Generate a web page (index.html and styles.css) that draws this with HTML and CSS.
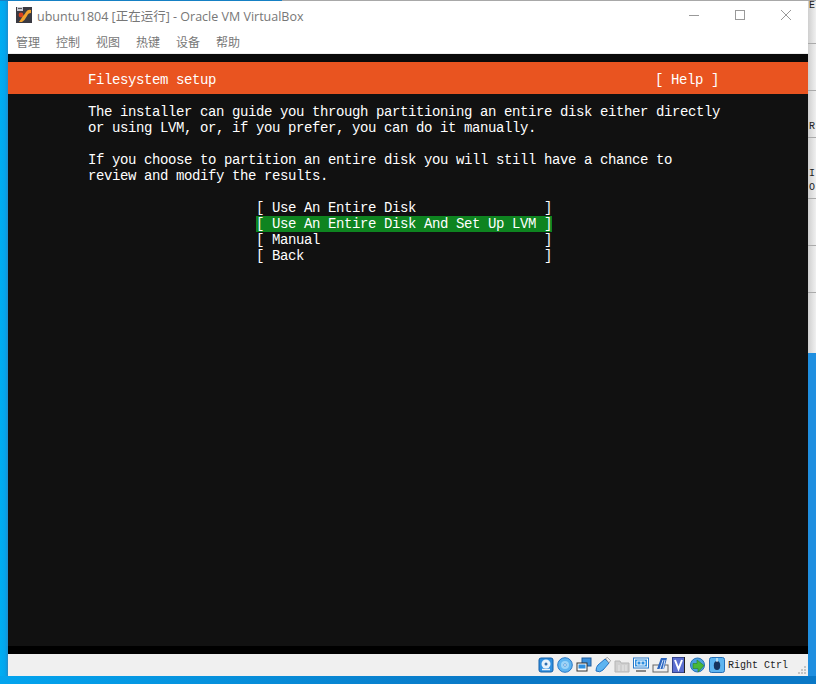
FILE: index.html
```html
<!DOCTYPE html>
<html lang="zh">
<head>
<meta charset="utf-8">
<title>ubuntu1804 - Oracle VM VirtualBox</title>
<link rel="stylesheet" href="styles.css">
</head>
<body>
<div class="top-edge"><div class="top-blue"></div><div class="top-gray"></div></div>
<div class="desktop">
  <div class="left-edge"></div>
  <main class="window">
    <header class="titlebar">
      <svg class="app-icon" width="16" height="16" viewBox="0 0 16 16">
        <rect width="16" height="16" fill="#3a3a42"/>
        <rect x="1" y="0" width="6" height="4" fill="#c9c9d2"/>
        <rect x="2" y="1" width="4" height="1" fill="#555"/>
        <circle cx="5" cy="8" r="2.4" fill="#d8401c"/>
        <path d="M3 15 L7 9 Q9 7 10 5 Q12 2 15 3 L15 6 Q12 6 11 9 Q9 13 6 15 Z" fill="#f2a22c"/>
      </svg>
      <span class="title">ubuntu1804 [正在运行] - Oracle VM VirtualBox</span>
      <div class="controls">
        <svg width="12" height="12" viewBox="0 0 12 12"><path d="M1 6.5H11" stroke="#999" fill="none"/></svg>
        <svg width="12" height="12" viewBox="0 0 12 12"><rect x="1.5" y="1.5" width="9" height="9" stroke="#999" fill="none"/></svg>
        <svg width="12" height="12" viewBox="0 0 12 12"><path d="M1 1L11 11M11 1L1 11" stroke="#999" fill="none"/></svg>
      </div>
    </header>
    <nav class="menubar">
      <span>管理</span><span>控制</span><span>视图</span><span>热键</span><span>设备</span><span>帮助</span>
    </nav>
    <section class="screen">
      <div class="term-header">
        <span>Filesystem setup</span>
        <span>[ Help ]</span>
      </div>
      <pre class="term-text">The installer can guide you through partitioning an entire disk either directly
or using LVM, or, if you prefer, you can do it manually.

If you choose to partition an entire disk you will still have a chance to
review and modify the results.</pre>
      <ul class="term-menu">
        <li><span>[ Use An Entire Disk</span><span>]</span></li>
        <li class="selected"><span>[ Use An Entire Disk And Set Up LVM</span><span>]</span></li>
        <li><span>[ Manual</span><span>]</span></li>
        <li><span>[ Back</span><span>]</span></li>
      </ul>
    </section>
    <footer class="statusbar">
      <div class="icons">
        <svg class="ic" width="16" height="16" viewBox="0 0 16 16"><rect x="1" y="1" width="14" height="14" rx="2" fill="#2f8fe0" stroke="#1560a8"/><circle cx="8" cy="7" r="4.5" fill="#e8f2fb"/><circle cx="8" cy="7" r="1.5" fill="#2f6fb0"/><path d="M4 12.5H12" stroke="#e8f2fb" stroke-width="1.5"/></svg>
        <svg class="ic" width="16" height="16" viewBox="0 0 16 16"><circle cx="8" cy="8" r="7.3" fill="#5db4f0" stroke="#2878c8"/><circle cx="8" cy="8" r="4" fill="#9ad4f8"/><circle cx="8" cy="8" r="1.3" fill="#fff" stroke="#2878c8" stroke-width=".6"/></svg>
        <svg class="ic" width="16" height="16" viewBox="0 0 16 16"><rect x="6" y="1" width="9" height="8" fill="#3c90dc" stroke="#1c5a9c"/><rect x="1" y="6" width="10" height="8" fill="#fff" stroke="#333"/><rect x="2.500" y="7.500" width="7" height="4" fill="#2f8fe0"/></svg>
        <svg class="ic" width="16" height="16" viewBox="0 0 16 16"><path d="M1 14 Q1 10 3 8 L10 2 L14 6 L8 13 Q5 16 1 14 Z" fill="#5db4f0" stroke="#2272c4"/><path d="M10.500 1.500 L12.500 0.500 L15.500 3.500 L14 6 Z" fill="#eee" stroke="#777" stroke-width=".6"/></svg>
        <svg class="ic" width="16" height="16" viewBox="0 0 16 16"><path d="M1 4H6L7 6H15V15H1Z" fill="#cfcfcf" stroke="#b5b5b5"/><path d="M5 8V14M9 8V14M12 8V14" stroke="#e8e8e8"/></svg>
        <svg class="ic" width="16" height="16" viewBox="0 0 16 16"><rect x="0.500" y="1" width="15" height="10" fill="#fff" stroke="#2878c8"/><rect x="2" y="2.500" width="12" height="7" fill="#2f8fe0"/><path d="M4 4H12V8H4ZM8 4V8" fill="none" stroke="#fff"/><path d="M3 14H13" stroke="#888" stroke-width="2"/></svg>
        <svg class="ic" width="17" height="16" viewBox="0 0 17 16"><rect x="1" y="8" width="15" height="7" fill="#eee" stroke="#666"/><path d="M5 12 L9 1 H15 L12 12 Z" fill="#2c66c0"/><path d="M8 12 L11 3M11 12 L13 3" stroke="#cfe2fa"/></svg>
        <svg class="ic" width="13" height="16" viewBox="0 0 13 16"><rect x="0.500" y="0.500" width="12" height="15" fill="#5a6ed0" stroke="#33428c"/><path d="M3 3 L6.500 12 L10 3" stroke="#fff" stroke-width="2" fill="none"/></svg>
        <span class="caret"></span>
        <svg class="ic" width="16" height="16" viewBox="0 0 16 16"><circle cx="7.500" cy="8" r="7" fill="#4aa0e0" stroke="#2470b8"/><path d="M7 3 L14 8.500 L8 15 V11.500 H3 V6.500 H7 Z" fill="#48b838" stroke="#2c8020" stroke-width=".6"/></svg>
        <svg class="ic" width="16" height="16" viewBox="0 0 16 16"><rect x="0.500" y="0.500" width="15" height="15" rx="2" fill="#5db4f0" stroke="#2470b8"/><ellipse cx="8" cy="8.500" rx="3.200" ry="4.500" fill="#16325c"/><path d="M8 1V5" stroke="#fff"/></svg>
        <span class="hostkey">Right Ctrl</span>
      </div>
      <svg class="grip" width="9" height="9" viewBox="0 0 9 9"><path d="M7 1h2v2H7zM4 4h2v2H4zM7 4h2v2H7zM1 7h2v2H1zM4 7h2v2H4zM7 7h2v2H7z" fill="#c4c4c4"/></svg>
    </footer>
  </main>
  <aside class="behind">
    <div class="behind-cell c1"><span>E</span></div>
    <div class="behind-cell c2"></div>
    <div class="behind-cell c3"><span>R</span></div>
    <div class="behind-cell c5"><span>I<br>O</span></div>
    <div class="behind-cell c2"></div>
    <div class="behind-cell c2"></div>
    <div class="behind-rest"></div>
  </aside>
</div>
<div class="bottom-edge"></div>
</body>
</html>
```
FILE: styles.css
```css
* { box-sizing: border-box; }
html, body { margin: 0; padding: 0; }
body {
  width: 816px;
  height: 684px;
  overflow: hidden;
  background: #0a7ec8;
  display: flex;
  flex-direction: column;
  font-family: "Noto Sans", "Noto Sans CJK SC", sans-serif;
}
.top-edge { height: 1px; display: flex; flex: none; }
.top-blue { width: 282px; background: #1580c4; }
.top-gray { flex: 1; background: #a8a8a8; }
.desktop { display: flex; height: 675px; flex: none; }
.left-edge {
  width: 8px;
  background: linear-gradient(to right, #00aef2 0, #02a6ee 60%, #1b8fcf 100%);
}
.window { width: 800px; display: flex; flex-direction: column; background: #fff; }
.titlebar { height: 29px; display: flex; align-items: center; padding-left: 8px; background: #fff; flex: none; }
.app-icon { flex: none; margin-top: -1px; }
.title {
  margin-left: 5px;
  font-size: 12.5px;
  color: #777;
  white-space: nowrap;
  font-family: "Open Sans", "Noto Sans CJK SC", sans-serif;
}
.controls { margin-left: auto; display: flex; gap: 34px; padding-right: 16px; margin-top: -1px; }
.menubar {
  height: 24px;
  flex: none;
  display: flex;
  gap: 16px;
  padding: 0 0 1px 8px;
  align-items: center;
  font-size: 12px;
  color: #777;
  font-family: "Noto Sans CJK SC", sans-serif;
  background: #fff;
  border-bottom: 1px solid #eee;
}
.screen {
  height: 600px;
  flex: none;
  background: #111;
  border-top: 8px solid #0a0a0a;
  border-bottom: 8px solid #000;
  font-family: "Liberation Mono", monospace;
  font-size: 14px;
  letter-spacing: -0.4px;
  line-height: 16px;
  color: #fff;
}
.term-header {
  height: 32px;
  background: #e95420;
  display: flex;
  justify-content: space-between;
  align-items: center;
  padding: 4px 89px 0 80px;
}
.term-text { margin: 10px 0 0 80px; font: inherit; }
.term-menu { list-style: none; margin: 16px 0 0 248px; padding: 0; width: 296px; }
.term-menu li { display: flex; justify-content: space-between; height: 16px; }
.term-menu .selected { background: #0e8420; }
.term-menu span { white-space: pre; }
.statusbar {
  height: 22px;
  flex: none;
  background: #f0f0f0;
  display: flex;
  align-items: center;
  justify-content: flex-end;
  box-shadow: 0 1px 1px #5a7f9a;
}
.icons { display: flex; align-items: center; gap: 3px; margin-right: 9px; }
.caret { width: 1px; height: 16px; background: #222; margin: 0 2px 0 -4px; }
.hostkey {
  font-family: "Liberation Mono", monospace;
  font-size: 10px;
  color: #222;
  white-space: nowrap;
}
.grip { margin: 8px 2px 0 0; flex: none; }
.behind { width: 8px; display: flex; flex-direction: column; flex: none; background: #1f8fe0; }
.behind-cell {
  background: linear-gradient(to right, #cfcfcf 0, #f0f0f0 100%);
  border-bottom: 1px solid #aaa;
  font-family: "Liberation Mono", monospace;
  font-size: 10px;
  line-height: 14px;
  color: #222;
  padding-left: 1px;
  overflow: hidden;
}
.c1 { height: 43px; line-height: 10px; }
.c2 { height: 47px; }
.c3 { height: 47px; padding-top: 29px; }
.c5 { height: 61px; padding-top: 29px; }
.behind-rest { height: 60px; background: linear-gradient(to right, #cfcfcf 0, #f0f0f0 100%); }
.bottom-edge { flex: 1; background: linear-gradient(to right, #03a4ee 0, #0a78c6 60%); }
```
